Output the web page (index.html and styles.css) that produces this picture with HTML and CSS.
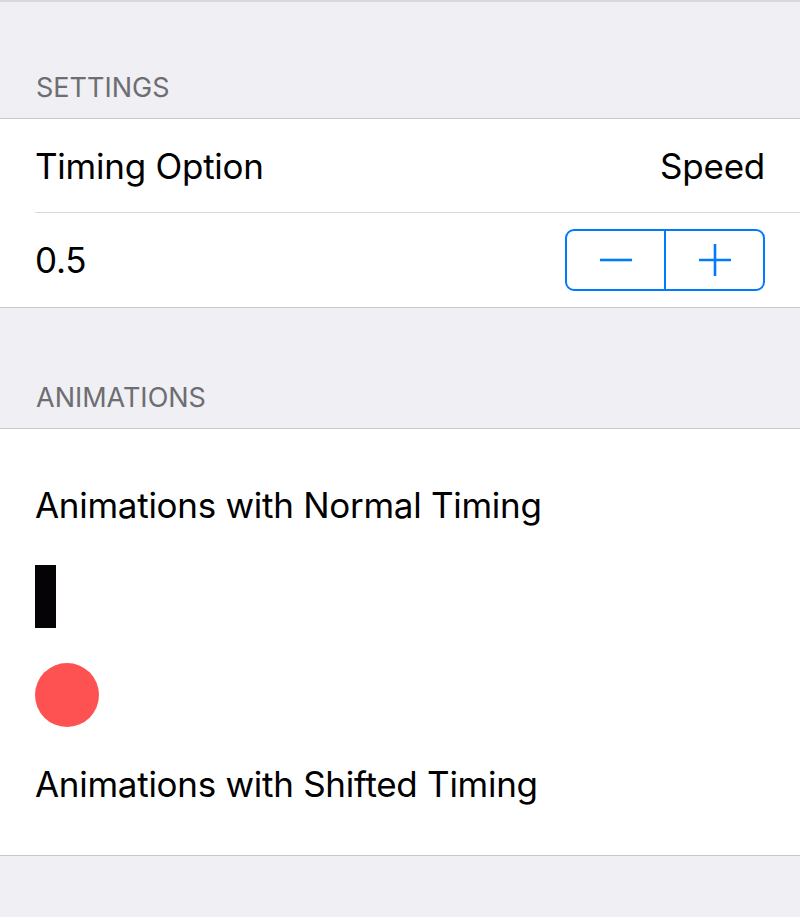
FILE: index.html
```html
<!DOCTYPE html>
<html>
<head>
<meta charset="utf-8">
<link rel="stylesheet" href="styles.css">
</head>
<body>
<div class="page">
  <div class="section-header first"><span>SETTINGS</span></div>
  <div class="group">
    <div class="row">
      <span class="label">Timing Option</span>
      <span class="value">Speed</span>
    </div>
    <div class="row row-sep">
      <span class="label">0.5</span>
      <div class="stepper">
        <button class="step" aria-label="decrement">
          <svg width="34" height="34" viewBox="0 0 34 34"><path d="M1 17H33" stroke="#007aff" stroke-width="2.6"/></svg>
        </button>
        <button class="step step-right" aria-label="increment">
          <svg width="34" height="34" viewBox="0 0 34 34"><path d="M1 17H33M17 1V33" stroke="#007aff" stroke-width="2.6"/></svg>
        </button>
      </div>
    </div>
  </div>
  <div class="section-header"><span>ANIMATIONS</span></div>
  <div class="group anim">
    <div class="text">Animations with Normal Timing</div>
    <div class="bar"></div>
    <div class="dot"></div>
    <div class="text">Animations with Shifted Timing</div>
  </div>
</div>
</body>
</html>
```

FILE: styles.css
```css
html, body {
  margin: 0;
  padding: 0;
}
body {
  background: #efeff4;
  font-family: Inter, "Noto Sans", sans-serif;
  color: #000;
}
.page {
  border-top: 2px solid #d8d7dc;
}
.section-header {
  height: 120px;
  box-sizing: border-box;
  display: flex;
  align-items: flex-end;
  padding: 0 36px 13px;
  font-size: 27px;
  line-height: 34px;
  color: #6d6d72;
}
.section-header.first {
  height: 116px;
}
.group {
  background: #fff;
  border-top: 1px solid #c8c7cc;
  border-bottom: 1px solid #c8c7cc;
}
.row {
  height: 93px;
  display: flex;
  align-items: center;
  justify-content: space-between;
  margin-left: 35px;
  padding-right: 35px;
  font-size: 35px;
  letter-spacing: -0.25px;
}
.row-sep {
  border-top: 1px solid #d9d8dc;
  height: 94px;
}
.label, .value {
  line-height: 44px;
}
.stepper {
  display: flex;
  width: 200px;
  height: 62px;
  box-sizing: border-box;
  border: 2px solid #007aff;
  border-radius: 9px;
  overflow: hidden;
}
.step {
  flex: 1;
  background: transparent;
  border: 0;
  padding: 0;
  display: flex;
  align-items: center;
  justify-content: center;
}
.step-right {
  border-left: 2px solid #007aff;
}
.anim {
  display: flex;
  flex-direction: column;
  align-items: flex-start;
  padding: 54px 35px 49px;
}
.anim .text {
  font-size: 35px;
  line-height: 44px;
  letter-spacing: -0.28px;
}
.bar {
  width: 21px;
  height: 63px;
  background: #050305;
  margin-top: 38px;
}
.dot {
  width: 64px;
  height: 64px;
  border-radius: 50%;
  background: #fe5252;
  margin-top: 35px;
  margin-bottom: 35px;
}
```
